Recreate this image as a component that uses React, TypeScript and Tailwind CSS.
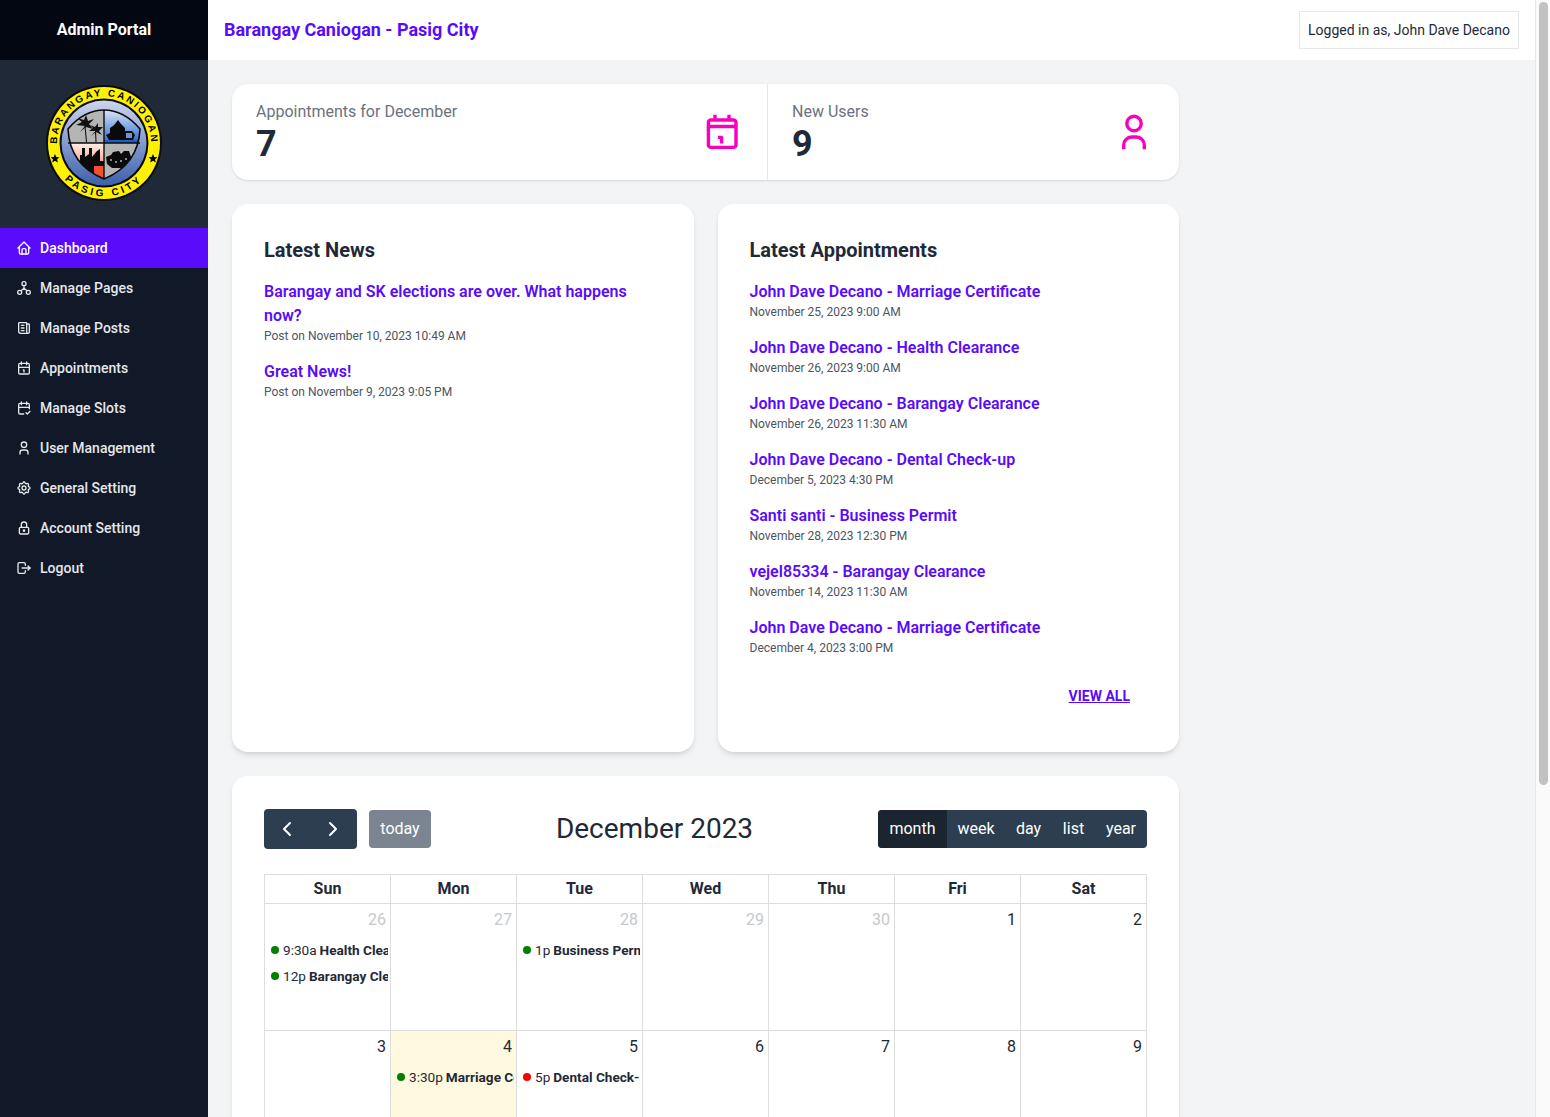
import React from 'react';
import {
  TbHome,
  TbNews,
  TbCalendarCheck,
  TbUser,
  TbSettings,
  TbLock,
  TbLogout,
  TbChevronLeft,
  TbChevronRight,
} from 'react-icons/tb';

const HierarchyIcon = ({ className }: { className?: string }) => (
  <svg viewBox="0 0 24 24" fill="none" stroke="currentColor" strokeWidth={2} strokeLinecap="round" strokeLinejoin="round" className={className}>
    <circle cx="12" cy="5.5" r="3" />
    <circle cx="5.5" cy="18.5" r="3" />
    <circle cx="18.5" cy="18.5" r="3" />
    <path d="M7.5 16L12 12.5L16.5 16M12 8.5V12.5" />
  </svg>
);

const CalendarIcon = ({ className }: { className?: string }) => (
  <svg viewBox="0 0 24 24" fill="none" stroke="currentColor" strokeWidth={2} strokeLinecap="round" strokeLinejoin="round" className={className}>
    <rect x="4" y="5" width="16" height="16" rx="2" />
    <path d="M8 3V7M16 3V7M4 11H20M11 15H12V18" />
  </svg>
);

const navItems = [
  { label: 'Dashboard', icon: TbHome, active: true },
  { label: 'Manage Pages', icon: HierarchyIcon },
  { label: 'Manage Posts', icon: TbNews },
  { label: 'Appointments', icon: CalendarIcon },
  { label: 'Manage Slots', icon: TbCalendarCheck },
  { label: 'User Management', icon: TbUser },
  { label: 'General Setting', icon: TbSettings },
  { label: 'Account Setting', icon: TbLock },
  { label: 'Logout', icon: TbLogout },
];

const news = [
  { title: 'Barangay and SK elections are over. What happens now?', date: 'Post on November 10, 2023 10:49 AM' },
  { title: 'Great News!', date: 'Post on November 9, 2023 9:05 PM' },
];

const appointments = [
  { title: 'John Dave Decano - Marriage Certificate', date: 'November 25, 2023 9:00 AM' },
  { title: 'John Dave Decano - Health Clearance', date: 'November 26, 2023 9:00 AM' },
  { title: 'John Dave Decano - Barangay Clearance', date: 'November 26, 2023 11:30 AM' },
  { title: 'John Dave Decano - Dental Check-up', date: 'December 5, 2023 4:30 PM' },
  { title: 'Santi santi - Business Permit', date: 'November 28, 2023 12:30 PM' },
  { title: 'vejel85334 - Barangay Clearance', date: 'November 14, 2023 11:30 AM' },
  { title: 'John Dave Decano - Marriage Certificate', date: 'December 4, 2023 3:00 PM' },
];

type CalEvent = { time: string; title: string; color: string };
type Day = { n: number; muted?: boolean; today?: boolean; events?: CalEvent[] };

const green = 'bg-[#008000]';
const red = 'bg-[#ff0000]';

const days: Day[] = [
  {
    n: 26,
    muted: true,
    events: [
      { time: '9:30a', title: 'Health Clearance', color: green },
      { time: '12p', title: 'Barangay Clearance', color: green },
    ],
  },
  { n: 27, muted: true },
  { n: 28, muted: true, events: [{ time: '1p', title: 'Business Permit', color: green }] },
  { n: 29, muted: true },
  { n: 30, muted: true },
  { n: 1 },
  { n: 2 },
  { n: 3 },
  { n: 4, today: true, events: [{ time: '3:30p', title: 'Marriage Certificate', color: green }] },
  { n: 5, events: [{ time: '5p', title: 'Dental Check-up', color: red }] },
  { n: 6 },
  { n: 7 },
  { n: 8 },
  { n: 9 },
];

const Logo = () => (
  <svg viewBox="0 0 120 120" className="w-[120px] h-[120px] block">
    <defs>
      <linearGradient id="disk" x1="0" y1="0" x2="0" y2="1">
        <stop offset="0" stopColor="#ccd5ef" />
        <stop offset="1" stopColor="#3c60ad" />
      </linearGradient>
      <linearGradient id="sky" x1="0" y1="0" x2="0" y2="1">
        <stop offset="0" stopColor="#ffffff" />
        <stop offset="1" stopColor="#2a6ad0" />
      </linearGradient>
      <linearGradient id="salmon" x1="0" y1="0" x2="0" y2="1">
        <stop offset="0" stopColor="#fff0e8" />
        <stop offset="1" stopColor="#f0583a" />
      </linearGradient>
      <clipPath id="shield">
        <path d="M60 27 C72 27 85 33 96 46 C95 68 84 86 60 96 C36 86 25 68 24 46 C35 33 48 27 60 27 Z" />
      </clipPath>
      <path id="arcTop" d="M15.8 76 A47 47 0 1 1 104.2 76" />
      <path id="arcBottom" d="M6.5 60 a53.5 53.5 0 0 0 107 0" />
    </defs>
    <circle cx="60" cy="60" r="58" fill="#0b0b0b" />
    <circle cx="60" cy="60" r="56" fill="#fff200" />
    <circle cx="60" cy="60" r="44.5" fill="#0b0b0b" />
    <circle cx="60" cy="60" r="42.5" fill="url(#disk)" />
    <text fontFamily="'Liberation Sans', sans-serif" fontWeight="700" fontSize="9.8" letterSpacing="2.2" fill="#000">
      <textPath href="#arcTop" startOffset="50%" textAnchor="middle">BARANGAY CANIOGAN</textPath>
    </text>
    <text fontFamily="'Liberation Sans', sans-serif" fontWeight="700" fontSize="10" letterSpacing="3.2" fill="#000">
      <textPath href="#arcBottom" startOffset="50%" textAnchor="middle">PASIG CITY</textPath>
    </text>
    <path d="M11 71l1.3 2.9 3.1.3-2.3 2.1.7 3.1-2.8-1.6-2.8 1.6.7-3.1-2.3-2.1 3.1-.3z" fill="#000" />
    <path d="M109 71l1.3 2.9 3.1.3-2.3 2.1.7 3.1-2.8-1.6-2.8 1.6.7-3.1-2.3-2.1 3.1-.3z" fill="#000" />
    <g clipPath="url(#shield)">
      <rect x="20" y="20" width="40" height="40" fill="#b5b5b5" />
      <rect x="60" y="20" width="40" height="40" fill="url(#sky)" />
      <rect x="20" y="60" width="40" height="40" fill="url(#salmon)" />
      <rect x="60" y="60" width="40" height="40" fill="#b5b5b5" />
      {/* palms */}
      <path d="M42.5 59 L41 43 M52 59 L51.5 48" stroke="#111" strokeWidth="1.1" fill="none" />
      <path d="M41 43 L32 42 L38 39 L33 35 L40 37 L42 32 L44 38 L50 36 L45 41 L49 46 L42 44 L36 49 Z" fill="#111" />
      <path d="M51.5 48 L45 48 L49 45 L46 42 L51 44 L54 40 L54 44 L59 44 L55 48 L58 52 L52 49 L47 53 Z" fill="#111" />
      {/* hall */}
      <path d="M62 52 L66 50 L66 45 L69 43 L71 41 L74 37 L77 41 L79 43 L81 45 L81 48 L88 48 L91 52 L89 57 L65 57 Z" fill="#0a0a0a" />
      <rect x="60" y="57" width="36" height="3" fill="#1d5fc4" />
      <rect x="82" y="50" width="6" height="5" fill="#6d93d8" />
      {/* factory */}
      <path d="M36 72 L38 72 L38 65 L41 65 L41 74 L45 71 L45 65 L48 65 L48 74 L53 68 L56 66 L56 78 L60 78 L60 84 L50 84 L50 92 L45 89 L36 80 Z" fill="#0a0a0a" />
      <rect x="50" y="83" width="10" height="12" fill="#f0502f" />
      {/* boat */}
      <path d="M62 74 L67 72 L69 69 L75 68 L77 71 L80 68 L85 68 L87 74 L89 74 L86 79 L78 85 L68 85 L63 81 Z" fill="#0a0a0a" />
      <circle cx="67" cy="77" r="1" fill="#b5b5b5" />
      <circle cx="72" cy="79" r="1" fill="#b5b5b5" />
      <circle cx="77" cy="78" r="1" fill="#b5b5b5" />
      <circle cx="82" cy="76" r="1" fill="#b5b5b5" />
    </g>
    <path d="M60 27 C72 27 85 33 96 46 C95 68 84 86 60 96 C36 86 25 68 24 46 C35 33 48 27 60 27 Z" fill="none" stroke="#0b0b0b" strokeWidth="1.6" />
    <path d="M60 27 V96 M24 60 H96" stroke="#0b0b0b" strokeWidth="1.4" />
  </svg>
);

const BigCalendar = () => (
  <svg viewBox="0 0 48 48" fill="none" stroke="#fa00bd" strokeWidth="3.4" strokeLinejoin="round" className="w-12 h-12">
    <rect x="10.4" y="12" width="27.6" height="27.4" rx="2.5" />
    <path d="M10 18.5H38M17 6.7V13M31 6.7V13" />
    <path d="M20 29.4H23.6V35.5" />
  </svg>
);

const BigUser = () => (
  <svg viewBox="0 0 48 48" fill="none" stroke="#fa00bd" strokeWidth="3.4" className="w-12 h-12">
    <circle cx="24" cy="15.5" r="7.2" />
    <path d="M13.7 41.3V37a8 8 0 0 1 8-8h4.6a8 8 0 0 1 8 8V41.3" />
  </svg>
);

const Sidebar = () => (
  <aside className="w-[208px] shrink-0 bg-[#111827] flex flex-col">
    <div className="h-[60px] bg-[#030712] flex items-center justify-center text-white font-bold text-base">Admin Portal</div>
    <div className="h-[168px] bg-[#1f2937] flex items-center justify-center pb-[3px]">
      <Logo />
    </div>
    <nav>
      {navItems.map(({ label, icon: Icon, active }) => (
        <a
          key={label}
          className={`h-10 flex items-center pl-4 gap-2 text-sm font-medium ${active ? 'bg-[#5a0bfa] text-white' : 'text-[#e5e7eb]'}`}
        >
          <Icon className="w-4 h-4" />
          {label}
        </a>
      ))}
    </nav>
  </aside>
);

const LinkList = ({ items }: { items: { title: string; date: string }[] }) => (
  <ul className="flex flex-col gap-4">
    {items.map((it, i) => (
      <li key={i}>
        <a className="block text-base font-semibold text-[#5a0bfa] leading-6">{it.title}</a>
        <p className="text-xs leading-4 text-[#4b5563]">{it.date}</p>
      </li>
    ))}
  </ul>
);

const Calendar = () => (
  <section className="bg-white rounded-2xl shadow-md px-8 pt-[33px] pb-8">
    <div className="flex items-center justify-between h-10 mb-[25px]">
      <div className="flex items-center gap-3 w-[167px]">
        <div className="flex h-10 w-[93px] bg-[#2c3e50] rounded text-white items-center justify-between pl-[11px] pr-[12px]">
          <TbChevronLeft className="w-6 h-6" />
          <TbChevronRight className="w-6 h-6" />
        </div>
        <button className="h-[38px] w-[62px] bg-[#7a8591] rounded text-white text-base">today</button>
      </div>
      <h2 className="text-[28px] text-[#1f2937] leading-none">December 2023</h2>
      <div className="flex h-[38px] bg-[#2c3e50] rounded text-white text-base overflow-hidden">
        <span className="bg-[#1a252f] w-[69px] flex items-center justify-center">month</span>
        <span className="w-[58px] flex items-center justify-center">week</span>
        <span className="w-[47px] flex items-center justify-center">day</span>
        <span className="w-[43px] flex items-center justify-center">list</span>
        <span className="w-[52px] flex items-center justify-center">year</span>
      </div>
    </div>
    <div className="w-[883px] grid grid-cols-[repeat(7,126px)] border-l border-t border-[#ddd] text-[#1f2937]">
      {['Sun', 'Mon', 'Tue', 'Wed', 'Thu', 'Fri', 'Sat'].map((d) => (
        <div key={d} className="h-[29px] border-r border-b border-[#ddd] flex items-center justify-center font-bold text-base">{d}</div>
      ))}
      {days.map((d) => (
        <div key={d.n} className={`h-[127px] border-r border-b border-[#ddd] overflow-hidden ${d.today ? 'bg-[#fff9df]' : ''}`}>
          <div className={`text-right px-1 pt-1 h-[31px] leading-6 text-base ${d.muted ? 'text-[#c6c8cb]' : ''}`}>{d.n}</div>
          <div className="flex flex-col gap-[6px] pt-[5px]">
            {d.events?.map((e) => (
              <div key={e.time} className="flex items-center whitespace-nowrap overflow-hidden text-[13.6px] leading-5 ml-[6px] mr-[2px]">
                <span className={`w-2 h-2 rounded-full shrink-0 mr-1 ${e.color}`} />
                <span className="shrink-0 mr-[3px]">{e.time}</span>
                <b className="shrink-0 font-bold">{e.title}</b>
              </div>
            ))}
          </div>
        </div>
      ))}
    </div>
  </section>
);

const App: React.FC = () => {
  return (
    <div className="h-screen flex overflow-hidden bg-[#f3f4f6] text-[#1f2937]" style={{ fontFamily: "Roboto, 'Liberation Sans', sans-serif" }}>
      <Sidebar />
      <div className="flex-1 min-w-0 overflow-hidden">
        <header className="h-[60px] bg-white flex items-center justify-between pl-4 pr-4">
          <h1 className="text-lg font-bold text-[#5a0bfa]">Barangay Caniogan - Pasig City</h1>
          <div className="h-[38px] w-[220px] border border-[#e5e7eb] flex items-center justify-center text-sm text-[#1f2937]">Logged in as, John Dave Decano</div>
        </header>
        <main className="w-[971px] pl-6 py-6 flex flex-col gap-6">
          <section className="bg-white rounded-2xl shadow h-24 flex">
            <div className="w-[536px] border-r border-[#e5e7eb] pl-6 pr-[21px] flex items-center justify-between">
              <div>
                <p className="text-base text-[#6b7280] leading-6">Appointments for December</p>
                <p className="text-4xl font-bold leading-10">7</p>
              </div>
              <BigCalendar />
            </div>
            <div className="flex-1 pl-6 pr-[21px] flex items-center justify-between">
              <div>
                <p className="text-base text-[#6b7280] leading-6">New Users</p>
                <p className="text-4xl font-bold leading-10">9</p>
              </div>
              <BigUser />
            </div>
          </section>
          <div className="grid grid-cols-2 gap-6">
            <section className="bg-white rounded-2xl shadow-md h-[548px] p-8">
              <h2 className="text-xl font-bold leading-7 mb-4">Latest News</h2>
              <LinkList items={news} />
            </section>
            <section className="bg-white rounded-2xl shadow-md h-[548px] p-8">
              <h2 className="text-xl font-bold leading-7 mb-4">Latest Appointments</h2>
              <LinkList items={appointments} />
              <div className="text-right pr-[17px] mt-[28px]">
                <a className="text-sm font-bold underline text-[#5a0bfa]">VIEW ALL</a>
              </div>
            </section>
          </div>
          <Calendar />
        </main>
      </div>
      {/* browser scrollbar */}
      <div className="w-[15px] shrink-0 bg-[#fafafa] border-l border-[#e8e8e8] pl-[3px] pt-[2px]">
        <div className="w-[9px] h-[783px] rounded-full bg-[#c2c2c2]" />
      </div>
    </div>
  );
};

export default App;
